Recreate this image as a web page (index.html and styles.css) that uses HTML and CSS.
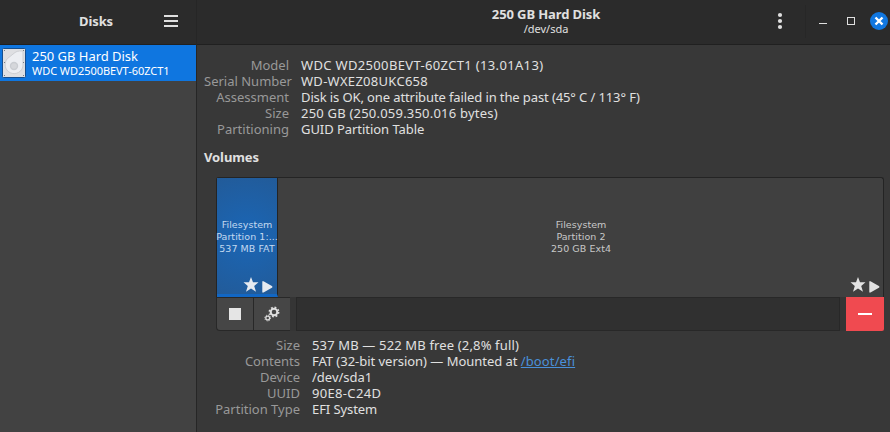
FILE: index.html
```html
<!DOCTYPE html>
<html lang="en">
<head>
<meta charset="utf-8">
<title>Disks</title>
<link rel="stylesheet" href="styles.css">
</head>
<body>
<div class="window">
  <aside class="sidebar">
    <header class="side-header">
      <h1 class="side-title">Disks</h1>
      <svg class="menu-icon" width="14" height="12" viewBox="0 0 14 12"><path d="M0 0h14v2H0zM0 5h14v2H0zM0 10h14v2H0z" fill="#dfdfdf"/></svg>
    </header>
    <div class="disk">
      <svg class="disk-icon" width="24" height="30" viewBox="0 0 24 30">
        <rect x=".5" y=".5" width="23" height="29" rx="1" fill="#dedfe2" stroke="#174f8e"/>
        <path d="M17.500 3H21v15a9 9 0 1 1-15.500-7.500L13 4.500Q15 3 17.500 3z" fill="#eceef2" stroke="#cdcfd3"/>
        <circle cx="12" cy="18" r="4.200" fill="#c9ccd1"/><circle cx="12" cy="18" r="2.800" fill="#d5d7db"/>
        <path d="M2 2h1v1H2zM21 2h1v1h-1zM2 14h1v1H2zM21 14h1v1h-1zM2 27h1v1H2zM21 27h1v1h-1z" fill="#777b82"/>
      </svg>
      <div class="disk-text">
        <div class="disk-name">250 GB Hard Disk</div>
        <div class="disk-model">WDC WD2500BEVT-60ZCT1</div>
      </div>
    </div>
  </aside>
  <main class="main">
    <header class="main-header">
      <div class="heading">
        <h2 class="heading-title">250 GB Hard Disk</h2>
        <div class="heading-sub">/dev/sda</div>
      </div>
      <div class="controls">
        <svg class="control-icons" width="114" height="44" viewBox="776 0 114 44">
          <g fill="#dfdfdf"><circle cx="780" cy="15" r="2.100"/><circle cx="780" cy="21" r="2.100"/><circle cx="780" cy="27" r="2.100"/><path d="M819 23h8v1h-8z"/></g>
          <path d="M805.500 5v33" stroke="#272727"/>
          <rect x="847.500" y="17.500" width="7" height="7" fill="none" stroke="#dfdfdf"/>
          <circle cx="879" cy="21" r="9" fill="#1177e0"/>
          <path d="M875.500 17.500l7 7m0-7l-7 7" stroke="#fff" stroke-width="2.400"/>
        </svg>
      </div>
    </header>
    <section class="content">
      <dl class="info info-disk">
        <dt>Model</dt><dd class="model">WDC WD2500BEVT-60ZCT1 (13.01A13)</dd>
        <dt>Serial Number</dt><dd class="serial">WD-WXEZ08UKC658</dd>
        <dt>Assessment</dt><dd class="assessment">Disk is OK, one attribute failed in the past (45° C / 113° F)</dd>
        <dt>Size</dt><dd class="size">250 GB (250.059.350.016 bytes)</dd>
        <dt>Partitioning</dt><dd class="table">GUID Partition Table</dd>
      </dl>
      <h3 class="volumes-title">Volumes</h3>
      <div class="volumes">
        <div class="map">
          <div class="part part-active">
            <div class="part-label"><div>Filesystem</div><div>Partition 1:...</div><div>537 MB FAT</div></div>
            <svg class="marks" width="30" height="18" viewBox="0 0 30 18"><path d="M8 0l2 5.300h5.500L11.200 9l1.800 5.800L8 11.400l-5 3.400L4.800 9 .500 5.300H6zM19.300 4.200h1.200l8.800 5v1.200l-8.800 5h-1.200z" fill="#e6eaf0"/></svg>
          </div>
          <div class="part">
            <div class="part-label part-label-wide"><div>Filesystem</div><div>Partition 2</div><div>250 GB Ext4</div></div>
            <svg class="marks" width="30" height="18" viewBox="0 0 30 18"><path d="M8 0l2 5.300h5.500L11.200 9l1.800 5.800L8 11.400l-5 3.400L4.800 9 .500 5.300H6zM19.300 4.200h1.200l8.800 5v1.200l-8.800 5h-1.200z" fill="#e3e3e3"/></svg>
          </div>
        </div>
        <div class="toolbar">
          <div class="tool tool-stop"><svg width="12" height="12"><path d="M0 0h12v12H0z" fill="#e5e5e5"/></svg></div>
          <div class="tool tool-gear"><svg width="16" height="16" viewBox="0 0 16 16" fill="none" stroke="#dfdfdf"><circle cx="10" cy="6" r="3.300" stroke-width="2"/><circle cx="10" cy="6" r="4.700" stroke-width="1.500" stroke-dasharray="1.850 1.840"/><circle cx="3.700" cy="12" r="1.900" stroke-width="1.300"/><circle cx="3.700" cy="12" r="2.900" stroke-width="1" stroke-dasharray="1.140 1.138"/></svg></div>
          <div class="trough"></div>
          <div class="tool-delete"><svg width="14" height="2"><path d="M0 0h14v2H0z" fill="#fff"/></svg></div>
        </div>
      </div>
      <dl class="info info-part">
        <dt>Size</dt><dd class="part-size">537 MB — 522 MB free (2,8% full)</dd>
        <dt>Contents</dt><dd class="part-contents">FAT (32-bit version) — Mounted at <a class="link">/boot/efi</a></dd>
        <dt>Device</dt><dd>/dev/sda1</dd>
        <dt>UUID</dt><dd class="part-uuid">90E8-C24D</dd>
        <dt>Partition Type</dt><dd class="part-type">EFI System</dd>
      </dl>
    </section>
  </main>
</div>
</body>
</html>
```
FILE: styles.css
```css
* { box-sizing: border-box; margin: 0; padding: 0; }
body { width: 890px; height: 432px; overflow: hidden; background: #383838; color: #e0e0e0; font: 13px/16px "Noto Sans", "Open Sans", sans-serif; }
svg { display: block; flex: none; }
.window { display: flex; height: 432px; }
.sidebar { width: 196px; background: #424242; }
.side-header { display: flex; align-items: center; height: 45px; padding-left: 79px; background: #2b2b2b; border-bottom: 1px solid #202020; }
.side-title { width: 85px; font-size: 13px; line-height: 16px; font-weight: 700; letter-spacing: -.1px; padding-bottom: 3px; }
.menu-icon { margin-top: -2px; }
.disk { display: flex; height: 36px; background: #0f76e0; color: #fff; padding: 3px 0 0 2px; }
.disk-text { padding-left: 6px; white-space: nowrap; }
.disk-name { line-height: 16px; letter-spacing: -.03px; }
.disk-model { font-size: 11px; line-height: 14px; letter-spacing: -.06px; }
.main { flex: 1; min-width: 0; border-left: 1px solid #262626; }
.main-header { display: flex; height: 45px; background: #2b2b2b; border-bottom: 1px solid #202020; }
.heading { flex: 1; padding: 6px 0 0 119px; text-align: center; }
.heading-title { font-size: 13px; line-height: 16px; letter-spacing: -.1px; }
.heading-sub { font-size: 11px; line-height: 14px; }
.controls { width: 114px; }
.content { padding: 12px 6px 0 7px; }
.info { display: grid; grid-auto-rows: 16px; column-gap: 12px; white-space: nowrap; }
.info-disk { grid-template-columns: 85px 1fr; }
.info-part { grid-template-columns: 96px 1fr; padding-top: 6px; }
dt { text-align: right; color: #999; }
.model { letter-spacing: .34px; }
.serial { letter-spacing: .28px; }
.assessment { letter-spacing: -.11px; }
.size { letter-spacing: .21px; }
.table { letter-spacing: -.05px; }
.part-size { letter-spacing: .15px; }
.part-contents { letter-spacing: -.03px; }
.part-uuid { letter-spacing: .33px; }
.part-type { letter-spacing: -.08px; }
.link { color: #4a90d9; text-decoration: underline; letter-spacing: .12px; }
.volumes-title { margin-top: 12px; font-size: 13px; line-height: 16px; letter-spacing: -.1px; }
.volumes { margin: 12px 0 0 12px; width: 668px; }
.map { display: flex; height: 120px; border: 1px solid #242424; border-bottom: 0; border-radius: 3px 3px 0 0; background: #404040; }
.part { position: relative; flex: 1; display: flex; justify-content: center; padding-top: 41px; font: 9.5px/12px "DejaVu Sans", sans-serif; letter-spacing: .05px; color: #c8c8c8; text-align: center; white-space: nowrap; }
.part-active { flex: none; width: 61px; border-right: 1px solid #242424; border-bottom: 3px solid #1267c4; background: radial-gradient(circle, #1a66b6 0%, #225b99 100%); color: #c3d9f0; }
.part-label { flex: none; }
.part-label-wide { padding-left: 1px; }
.marks { position: absolute; right: 3px; bottom: 2px; }
.part-active .marks { right: 4px; bottom: -1px; }
.toolbar { display: flex; height: 34px; background: #353535; border-radius: 0 0 4px 4px; }
.tool { display: flex; align-items: center; justify-content: center; height: 34px; width: 37px; background: #464646; border: 1px solid #282828; border-width: 1px 0 1px 1px; }
.tool-stop { border-bottom-left-radius: 4px; }
.trough { flex: 1; margin: 0 6px; background: #303030; border: 1px solid #282828; }
.tool-delete { display: flex; align-items: center; justify-content: center; width: 38px; background: #f04a50; border-bottom-right-radius: 2px; }
```
